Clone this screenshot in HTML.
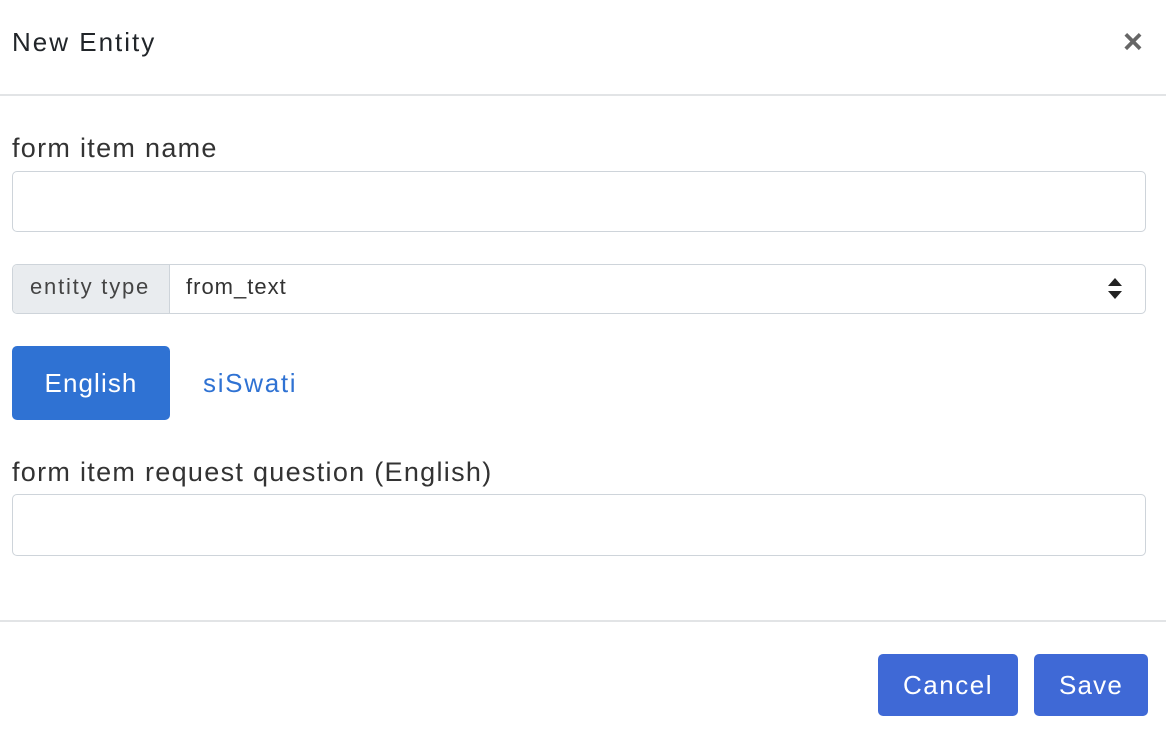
<!DOCTYPE html>
<html><head><style>
body{margin:0;width:1166px;height:738px;background:#fff;font-family:"Liberation Sans",sans-serif;position:relative;overflow:hidden;color:#212529}
.a{position:absolute;white-space:nowrap}
.inp{position:absolute;left:12px;width:1134px;border:1px solid #ced4da;border-radius:5px;box-sizing:border-box;background:#fff}
</style></head><body>
<div class="a" style="left:12px;top:27px;font-size:26px;letter-spacing:2px;color:#212529">New Entity</div>
<div class="a" style="left:1123px;top:22px;font-size:34px;color:#666;font-weight:bold;line-height:40px">×</div>
<div class="a" style="left:0;top:94px;width:1166px;height:2px;background:#e2e4e6"></div>
<div class="a" style="left:12px;top:133px;font-size:27px;letter-spacing:1.3px;color:#333">form item name</div>
<div class="inp" style="top:171px;height:61px"></div>
<div class="inp" style="top:264px;height:50px"></div>
<div class="a" style="left:13px;top:265px;width:156px;height:48px;background:#e9ecef;border-right:1px solid #ced4da;border-radius:4px 0 0 4px"></div>
<div class="a" style="left:30px;top:274px;font-size:22px;letter-spacing:1.8px;color:#444">entity type</div>
<div class="a" style="left:186px;top:274px;font-size:22px;letter-spacing:1px;color:#333">from_text</div>
<div class="a" style="left:1108px;top:278px;width:0;height:0;border-left:7px solid transparent;border-right:7px solid transparent;border-bottom:8px solid #222"></div>
<div class="a" style="left:1108px;top:291px;width:0;height:0;border-left:7px solid transparent;border-right:7px solid transparent;border-top:8px solid #222"></div>
<div class="a" style="left:12px;top:346px;width:158px;height:74px;background:#2f72d3;border-radius:5px;color:#fff;font-size:26px;letter-spacing:1.1px;line-height:74px;text-align:center">English</div>
<div class="a" style="left:203px;top:368px;font-size:26px;letter-spacing:1.7px;color:#2f72d3">siSwati</div>
<div class="a" style="left:12px;top:457px;font-size:27px;letter-spacing:1.3px;color:#333">form item request question (English)</div>
<div class="inp" style="top:494px;height:62px"></div>
<div class="a" style="left:0;top:620px;width:1166px;height:2px;background:#e2e4e6"></div>
<div class="a" style="left:878px;top:654px;width:140px;height:62px;background:#3f69d6;border-radius:5px;color:#fff;font-size:26px;letter-spacing:1.5px;line-height:62px;text-align:center">Cancel</div>
<div class="a" style="left:1034px;top:654px;width:114px;height:62px;background:#3f69d6;border-radius:5px;color:#fff;font-size:26px;letter-spacing:1.2px;line-height:62px;text-align:center">Save</div>
</body></html>
